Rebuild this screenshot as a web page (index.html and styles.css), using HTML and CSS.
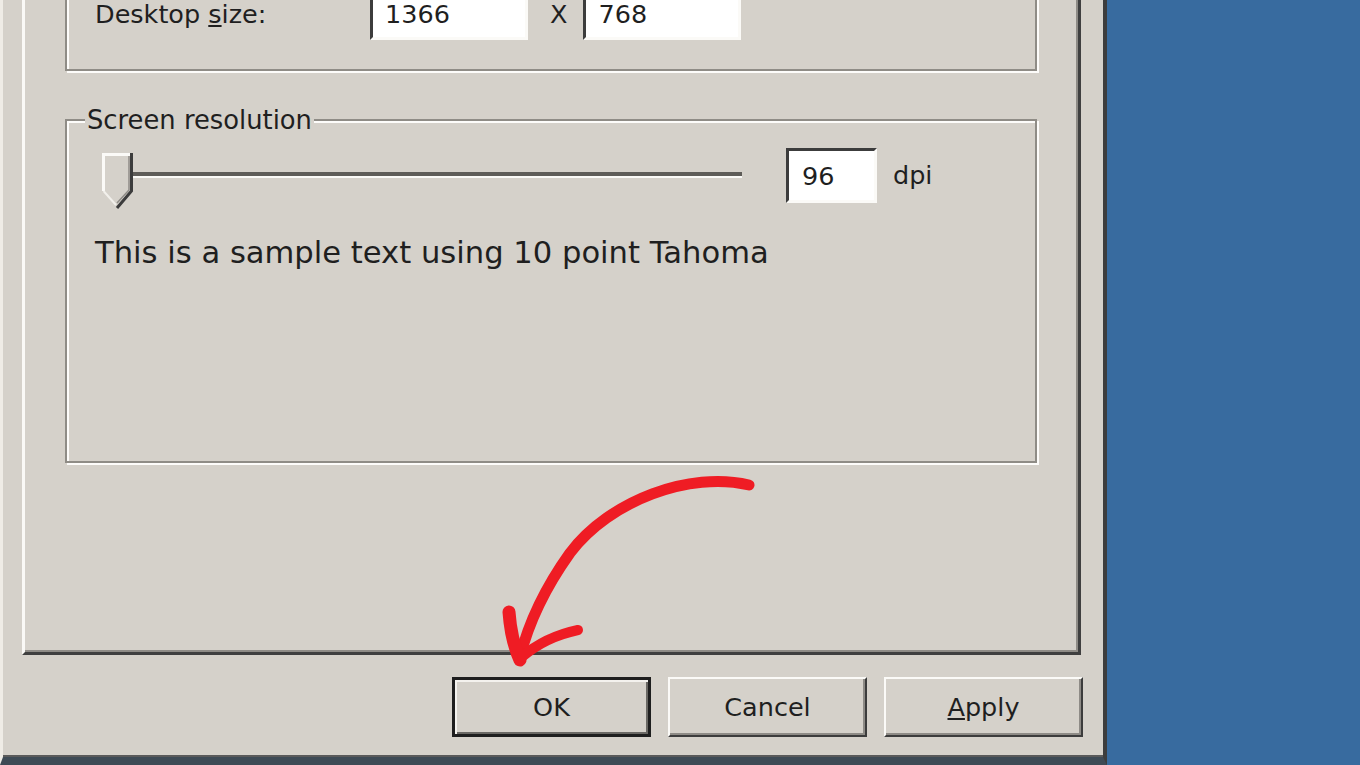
FILE: index.html
```html
<!DOCTYPE html>
<html lang="en">
<head>
    <meta charset="UTF-8">
    <meta name="viewport" content="width=device-width, initial-scale=1.0">
    <title>Graphics</title>
    <link rel="stylesheet" href="styles.css">
</head>
<body>
    <div class="dialog">
        <div class="tab-panel">
            <div class="group group-desktop">
                <div class="field-row">
                    <label class="field-label" for="deskWidth">Desktop <u>s</u>ize:</label>
                    <input class="edit edit-size" id="deskWidth" type="text" value="1366">
                    <span class="times">X</span>
                    <input class="edit edit-size" id="deskHeight" type="text" value="768">
                </div>
            </div>

            <fieldset class="group group-dpi">
                <legend>Screen resolution</legend>
                <div class="group-body">
                    <div class="dpi-row">
                        <div class="trackbar">
                            <div class="track"></div>
                            <svg class="thumb" width="32" height="57" viewBox="0 0 32 57">
                                <polygon points="0,0 31,0 31,38 15,56 0,38" fill="#d5d1ca"/>
                                <polyline points="1.5,38 1.5,1.5 29,1.5" fill="none" stroke="#fbfaf7" stroke-width="3"/>
                                <polyline points="1.5,38 14,52" fill="none" stroke="#f2f0eb" stroke-width="2"/>
                                <polyline points="29.5,0 29.5,38 15,55" fill="none" stroke="#3c3c3c" stroke-width="3"/>
                                <polyline points="27,3 27,37 15,50" fill="none" stroke="#8e8b86" stroke-width="1.5"/>
                            </svg>
                        </div>
                        <input class="edit edit-dpi" id="dpi" type="text" value="96">
                        <span class="unit">dpi</span>
                    </div>
                    <p class="sample">This is a sample text using 10 point Tahoma</p>
                </div>
            </fieldset>
        </div>

        <div class="buttons">
            <button class="btn btn-default" type="button">OK</button>
            <button class="btn" type="button">Cancel</button>
            <button class="btn" type="button"><u>A</u>pply</button>
        </div>

        <!-- hand drawn arrow pointing at OK -->
        <svg class="arrow" width="270" height="210" viewBox="490 465 270 210">
            <g fill="none" stroke="#ef1c24" stroke-linecap="round">
                <path d="M749,485 C690,471 610,500 570,553 C545,588 528,625 520,657" stroke-width="11"/>
                <path d="M509,612 Q511,640 520,660" stroke-width="13"/>
                <path d="M522,657 Q545,637 578,630" stroke-width="10"/>
            </g>
        </svg>
    </div>
</body>
</html>
```

FILE: styles.css
```css
body {
    margin: 0;
    background-color: #386b9f;
    font-family: "DejaVu Sans", Tahoma, sans-serif;
    font-size: 25.5px;
    color: #1f1f1f;
    overflow: hidden;
}
.dialog {
    position: relative;
    box-sizing: border-box;
    width: 1107px;
    height: 765px;
    padding: 0 22px 0 19px;
    background-color: #d5d1ca;
    border-left: 3px solid #efece6;
    border-right: 4px solid #3d3d3d;
    border-bottom: 8px solid #3e4a55;
    box-shadow: inset 0 -2px 0 #5a5a5a;
}
.tab-panel {
    display: flex;
    flex-direction: column;
    box-sizing: border-box;
    height: 655px;
    padding: 0 41px 0 40px;
    border-left: 3px solid #faf9f6;
    border-right: 3px solid #3f3f3f;
    border-bottom: 3px solid #3f3f3f;
    box-shadow: inset -2px -2px 0 #8e8b86;
}
.group {
    border: 2px solid #8f8c86;
    box-shadow: inset 2px 2px 0 #fdfcfa, 2px 2px 0 #fdfcfa;
}
.group-desktop {
    margin-top: -40px;
    padding: 26px 0 29px 28px;
}
.field-row {
    display: flex;
    align-items: center;
    height: 52px;
}
.field-label {
    width: 275px;
}
.times {
    margin: 0 16px 0 22px;
}
.edit {
    box-sizing: border-box;
    height: 52px;
    margin: 0;
    padding: 0 0 0 12px;
    border: 3px solid;
    border-color: #3c3c3c #fbfaf7 #fbfaf7 #3c3c3c;
    background-color: #fff;
    font: inherit;
    color: inherit;
    outline: none;
}
.edit-size {
    width: 158px;
}
.group-dpi {
    margin: 34px 0 0;
    padding: 0;
    min-width: 0;
}
.group-dpi legend {
    margin-left: 18px;
    padding: 0 2px;
    font-size: 25.8px;
    line-height: 30px;
    background-color: #d5d1ca;
}
.group-body {
    box-sizing: border-box;
    height: 326px;
    padding-top: 13px;
}
.dpi-row {
    display: flex;
    align-items: flex-start;
}
.trackbar {
    position: relative;
    width: 640px;
    height: 60px;
    margin-left: 35px;
}
.track {
    margin: 24px 0 0 14px;
    height: 4px;
    background-color: #5e5c58;
    border-bottom: 2px solid #fbfaf7;
}
.thumb {
    position: absolute;
    left: 0;
    top: 5px;
}
.edit-dpi {
    width: 91px;
    height: 55px;
    margin-left: 44px;
    padding-left: 13px;
}
.unit {
    margin-left: 16px;
    line-height: 55px;
}
.sample {
    margin: 25px 0 0 28px;
    font-size: 30.6px;
    line-height: 40px;
}
.buttons {
    display: flex;
    justify-content: flex-end;
    gap: 17px;
    margin: 22px -2px 0 0;
}
.btn {
    box-sizing: border-box;
    width: 199px;
    height: 60px;
    padding: 0;
    border: 2px solid;
    border-color: #fbfaf7 #3c3c3c #3c3c3c #fbfaf7;
    box-shadow: inset -2px -2px 0 #8e8b86;
    background-color: #d5d1ca;
    font: inherit;
    color: inherit;
}
.btn-default {
    border: 3px solid #1e1e1e;
    box-shadow: inset 2px 2px 0 #f4f2ee, inset -2px -2px 0 #6a6864;
}
.arrow {
    position: absolute;
    left: 487px;
    top: 465px;
}
```
